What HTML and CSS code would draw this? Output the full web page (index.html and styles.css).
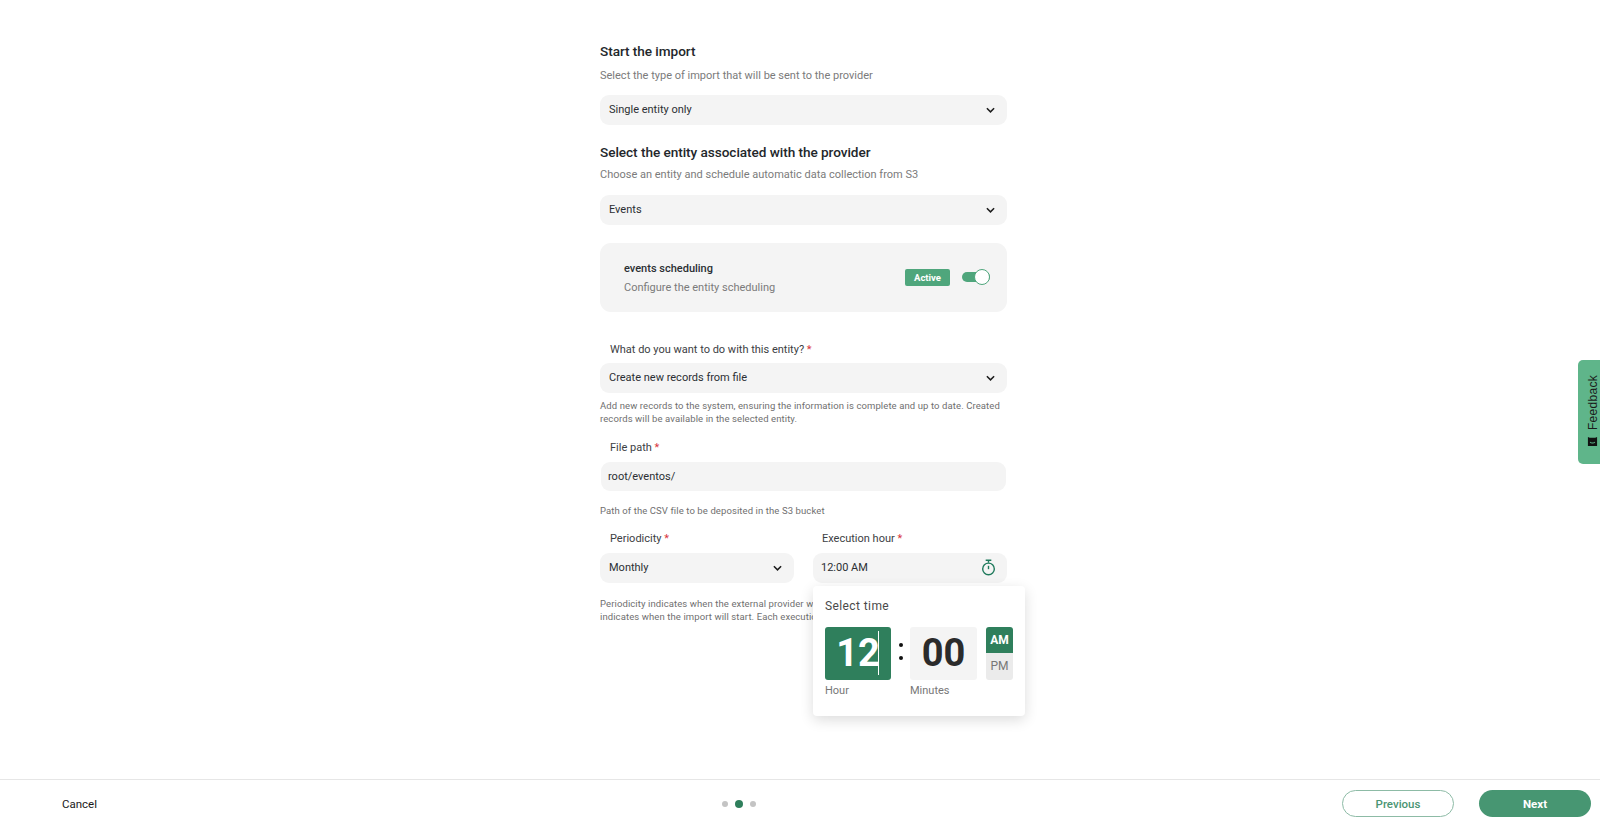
FILE: index.html
```html
<!DOCTYPE html>
<html>
<head>
  <title>Start the import</title>
  <link rel="stylesheet" href="styles.css">
</head>
<body>
  <div class="page">
    <div class="content">
      <div class="container">
        <h2 class="title">Start the import</h2>
        <p class="subtitle">Select the type of import that will be sent to the provider</p>
        <div class="field">
          <span>Single entity only</span>
          <svg class="chevron" viewBox="0 0 10 6"><path d="M1 1l4 4 4-4"/></svg>
        </div>

        <h2 class="title title-second">Select the entity associated with the provider</h2>
        <p class="subtitle subtitle-second">Choose an entity and schedule automatic data collection from S3</p>
        <div class="field">
          <span>Events</span>
          <svg class="chevron" viewBox="0 0 10 6"><path d="M1 1l4 4 4-4"/></svg>
        </div>

        <div class="card">
          <div class="card-text">
            <div class="card-title">events scheduling</div>
            <div class="card-desc">Configure the entity scheduling</div>
          </div>
          <span class="badge">Active</span>
          <span class="switch"><span class="knob"></span></span>
        </div>

        <label class="label label-first">What do you want to do with this entity? <em>*</em></label>
        <div class="field">
          <span>Create new records from file</span>
          <svg class="chevron" viewBox="0 0 10 6"><path d="M1 1l4 4 4-4"/></svg>
        </div>
        <p class="help">Add new records to the system, ensuring the information is complete and up to date. Created records will be available in the selected entity.</p>

        <label class="label label-path">File path <em>*</em></label>
        <div class="field field-input"><span>root/eventos/</span></div>
        <p class="help help-path">Path of the CSV file to be deposited in the S3 bucket</p>

        <div class="row">
          <div class="col">
            <label class="label">Periodicity <em>*</em></label>
            <div class="field">
              <span>Monthly</span>
              <svg class="chevron" viewBox="0 0 10 6"><path d="M1 1l4 4 4-4"/></svg>
            </div>
          </div>
          <div class="col col-time">
            <label class="label">Execution hour <em>*</em></label>
            <div class="field field-time">
              <span>12:00 AM</span>
              <svg class="timer" viewBox="0 0 16 18"><path d="M5 1.2h6M8 1.2v2.6"/><circle cx="8" cy="10.5" r="6.2"/><path d="M8 7.2v3.6"/></svg>
            </div>
          </div>
        </div>
        <p class="help help-period">Periodicity indicates when the external provider will send the file, and the execution hour indicates when the import will start. Each execution</p>

        <div class="picker">
          <div class="picker-title">Select time</div>
          <div class="picker-row">
            <div class="picker-col">
              <div class="digits digits-active">12<span class="caret"></span></div>
              <div class="picker-label">Hour</div>
            </div>
            <div class="colon"><span></span><span></span></div>
            <div class="picker-col">
              <div class="digits">00</div>
              <div class="picker-label">Minutes</div>
            </div>
            <div class="ampm">
              <div class="am">AM</div>
              <div class="pm">PM</div>
            </div>
          </div>
        </div>
      </div>
    </div>

    <div class="footer">
      <span class="cancel">Cancel</span>
      <div class="dots"><span></span><span class="dot-active"></span><span></span></div>
      <div class="buttons">
        <button class="btn btn-prev">Previous</button>
        <button class="btn btn-next">Next</button>
      </div>
    </div>
  </div>

  <div class="feedback">
    <span class="feedback-text">Feedback</span>
    <svg class="feedback-icon" viewBox="0 0 12 12"><path d="M1 1l2 1h6l2-1v10H1z"/><path class="smile" d="M3.5 6.5c1 1.6 4 1.6 5 0"/></svg>
  </div>
</body>
</html>
```

FILE: styles.css
```css
* {
  box-sizing: border-box;
}

html, body {
  margin: 0;
  height: 824px;
  overflow: hidden;
}

body {
  font-family: Roboto, "Liberation Sans", sans-serif;
  background-color: #ffffff;
  color: #212529;
}

.page {
  display: flex;
  flex-direction: column;
  height: 824px;
}

.content {
  flex: 1;
  padding-left: 7px;
}

.container {
  position: relative;
  width: 407px;
  margin: 0 auto;
  padding-top: 42px;
}

.title {
  margin: 0;
  font-size: 13.6px;
  line-height: 18px;
  font-weight: 500;
  color: #23272b;
  letter-spacing: -0.05px;
}

.title-second {
  margin-top: 18px;
}

.subtitle {
  margin: 8px 0 11px;
  font-size: 11px;
  line-height: 16px;
  color: #7b7b7b;
}

.subtitle-second {
  margin-top: 6px;
  margin-bottom: 12px;
}

.field {
  display: flex;
  align-items: center;
  justify-content: space-between;
  height: 30px;
  padding: 0 11px 1px 9px;
  background-color: #f4f4f4;
  border-radius: 9px;
  font-size: 11px;
  color: #2b2f33;
}

.chevron {
  width: 9px;
  height: 6px;
  margin-right: 1px;
  fill: none;
  stroke: #1c1c1c;
  stroke-width: 1.7;
}

.card {
  display: flex;
  align-items: center;
  height: 69px;
  margin-top: 18px;
  padding: 0 17px 0 24px;
  background-color: #f4f4f4;
  border-radius: 11px;
}

.card-text {
  flex: 1;
  padding-top: 1px;
}

.card-title {
  font-size: 11px;
  line-height: 14px;
  font-weight: 500;
  color: #2b2f33;
}

.card-desc {
  margin-top: 5px;
  font-size: 11px;
  line-height: 14px;
  color: #7b7b7b;
}

.badge {
  width: 45px;
  height: 17px;
  margin: 0 12px 1px 0;
  background-color: #4fa67c;
  border-radius: 2px;
  color: #ffffff;
  font-size: 9.5px;
  font-weight: 700;
  line-height: 17px;
  text-align: center;
}

.switch {
  position: relative;
  width: 28px;
  height: 10px;
  margin-bottom: 1px;
  background-color: #4fa67c;
  border-radius: 5px;
}

.knob {
  position: absolute;
  top: -3px;
  right: 0;
  width: 16px;
  height: 16px;
  background-color: #ffffff;
  border: 1px solid #4fa67c;
  border-radius: 50%;
}

.label {
  display: block;
  height: 14px;
  margin-bottom: 7px;
  padding-left: 10px;
  font-size: 11px;
  line-height: 14px;
  color: #3c4043;
}

.label em {
  color: #d9363e;
  font-style: normal;
}

.label-first {
  margin-top: 31px;
  margin-bottom: 6px;
}

.label-path {
  margin-top: 16px;
  margin-bottom: 7px;
}

.help {
  margin: 6px 0 0;
  font-size: 9.5px;
  line-height: 13px;
  color: #6f6f6f;
  letter-spacing: 0.1px;
}

.help-path {
  margin-top: 13px;
}

.help-period {
  margin-top: 14px;
}

.field-input {
  height: 29px;
  margin: 0 1px;
  padding-left: 7px;
}

.row {
  display: flex;
  gap: 19px;
  margin-top: 15px;
}

.col {
  flex: 1;
}

.col-time .label {
  padding-left: 9px;
}

.field-time {
  padding-left: 8px;
  padding-right: 10px;
}

.timer {
  width: 15px;
  height: 17px;
  margin-right: 1px;
  fill: none;
  stroke: #1f7a5c;
  stroke-width: 1.5;
}

.picker {
  position: absolute;
  top: 586px;
  left: 213px;
  width: 212px;
  height: 130px;
  padding: 12px 12px;
  background-color: #ffffff;
  border-radius: 4px;
  box-shadow: 0 4px 14px rgba(0, 0, 0, 0.14);
}

.picker-title {
  font-size: 12px;
  line-height: 16px;
  color: #4a4a4a;
  letter-spacing: 0.4px;
}

.picker-row {
  display: flex;
  margin-top: 13px;
}

.picker-col {
  width: 67px;
}

.digits {
  position: relative;
  height: 53px;
  background-color: #f4f4f4;
  border-radius: 3px;
  font-size: 38px;
  font-weight: 700;
  line-height: 53px;
  text-align: center;
  color: #2b2b2b;
}

.digits-active {
  width: 66px;
  background-color: #2f7f5c;
  color: #ffffff;
}

.caret {
  position: absolute;
  top: 4px;
  left: 53px;
  width: 1px;
  height: 44px;
  background-color: #ffffff;
}

.picker-label {
  margin-top: 4px;
  font-size: 11px;
  line-height: 13px;
  color: #777777;
}

.colon {
  display: flex;
  flex-direction: column;
  gap: 9px;
  align-items: center;
  width: 18px;
  padding-top: 16px;
}

.colon span {
  width: 4px;
  height: 4px;
  background-color: #111111;
  border-radius: 50%;
}

.ampm {
  width: 27px;
  height: 53px;
  margin-left: 9px;
  border-radius: 3px;
  overflow: hidden;
  font-size: 12px;
  text-align: center;
}

.am {
  height: 26px;
  background-color: #2f7f5c;
  color: #ffffff;
  font-weight: 700;
  line-height: 26px;
}

.pm {
  height: 27px;
  background-color: #ebebeb;
  color: #777777;
  line-height: 27px;
}

.footer {
  display: flex;
  align-items: center;
  justify-content: space-between;
  height: 45px;
  padding: 3px 9px 0 62px;
  border-top: 1px solid #e6e6e6;
}

.cancel {
  flex: 1;
  font-size: 11.5px;
  color: #1a1a1a;
}

.dots {
  display: flex;
  align-items: center;
  gap: 7px;
  margin-right: 586px;
}

.dots span {
  width: 6px;
  height: 6px;
  background-color: #c4c4c4;
  border-radius: 50%;
}

.dots .dot-active {
  width: 8px;
  height: 8px;
  background-color: #2f7f5c;
}

.buttons {
  display: flex;
  gap: 25px;
}

.btn {
  width: 112px;
  height: 27px;
  border-radius: 14px;
  font-family: Roboto, "Liberation Sans", sans-serif;
  font-size: 11.5px;
  font-weight: 500;
  padding: 0;
}

.btn-prev {
  background-color: #ffffff;
  border: 1px solid #8dbba6;
  color: #4b9573;
}

.btn-next {
  background-color: #479672;
  border: none;
  color: #ffffff;
  font-weight: 700;
}

.feedback {
  position: absolute;
  top: 360px;
  right: 0;
  display: flex;
  flex-direction: column;
  align-items: center;
  gap: 6px;
  width: 22px;
  height: 104px;
  padding: 15px 0 0 7px;
  background-color: #5fb58a;
  border-radius: 5px 0 0 5px;
}

.feedback-text {
  writing-mode: vertical-rl;
  transform: rotate(180deg);
  font-family: "Liberation Sans", Arial, sans-serif;
  font-size: 12px;
  letter-spacing: 0.3px;
  color: #1b1b1b;
}

.feedback-icon {
  width: 11px;
  height: 11px;
  fill: #111111;
}

.feedback-icon .smile {
  fill: none;
  stroke: #5fb58a;
  stroke-width: 1.2;
}
```
